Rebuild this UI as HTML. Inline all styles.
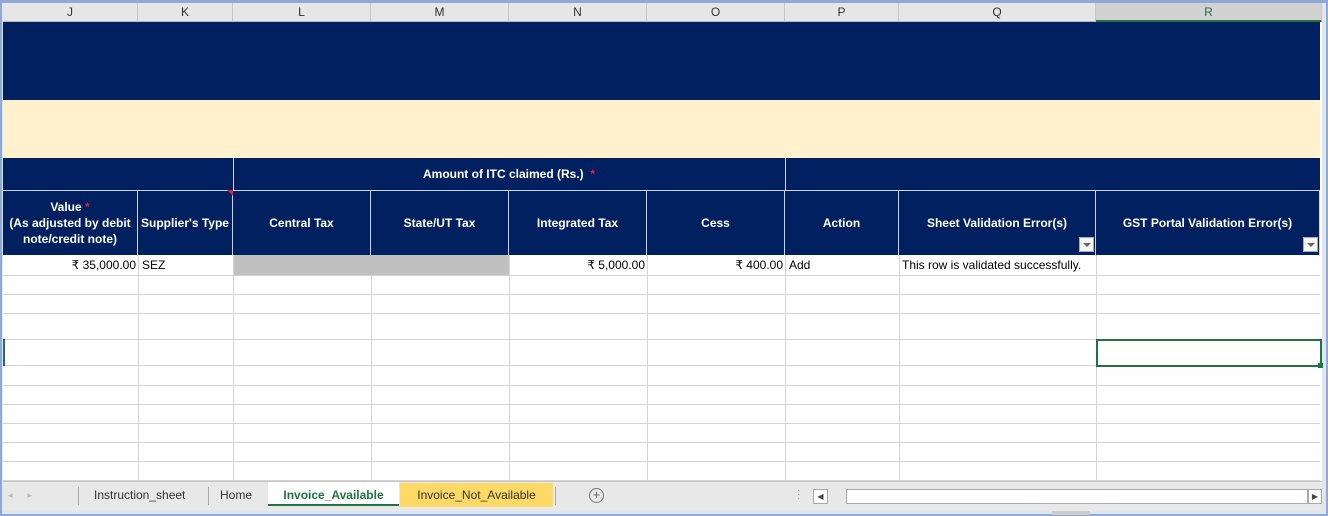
<!DOCTYPE html>
<html><head><style>
*{margin:0;padding:0;box-sizing:border-box}
body{width:1328px;height:516px;position:relative;background:#dfe6f0;font-family:"Liberation Sans",Arial,sans-serif;overflow:hidden}
.a{position:absolute}
.ch{position:absolute;top:3px;height:19px;background:#e6e6e6;border-right:1px solid #c8c8c8;border-bottom:1px solid #bdbdbd;font-size:12px;color:#333;text-align:center;line-height:19px}
.navy{background:#002060}
.hd{position:absolute;top:190px;height:65px;background:#002060;border-right:1px solid #c9d3e6;border-top:1px solid #c9d3e6;color:#fff;font-weight:bold;font-size:12px;display:flex;align-items:center;justify-content:center;text-align:center;line-height:16px}
.vl{position:absolute;top:255px;height:225px;width:1px;background:#d4d4d4}
.hl{position:absolute;left:3px;width:1317px;height:1px;background:#d4d4d4}
.c{position:absolute;top:256px;height:19px;font-size:12px;line-height:19px;color:#000}
.dd{position:absolute;top:237px;width:15px;height:15px;background:#f4f4f4;border:1px solid #aaa}
.dd:after{content:"";position:absolute;left:3px;top:5px;border-left:4px solid transparent;border-right:4px solid transparent;border-top:4px solid #666}
.star{color:#e0204a}
</style></head><body>
<div class="a" style="left:0;top:0;width:1328px;height:516px;border:2px solid #8ea9d8;border-top:3px solid #8ea9d8"></div>
<div class="a" style="left:3px;top:3px;width:1319px;height:478px;background:#fff"></div>
<div class="ch" style="left:3px;width:135px">J</div>
<div class="ch" style="left:138px;width:95px">K</div>
<div class="ch" style="left:233px;width:138px">L</div>
<div class="ch" style="left:371px;width:138px">M</div>
<div class="ch" style="left:509px;width:138px">N</div>
<div class="ch" style="left:647px;width:138px">O</div>
<div class="ch" style="left:785px;width:114px">P</div>
<div class="ch" style="left:899px;width:197px">Q</div>
<div class="ch" style="left:1096px;width:226px;background:#d2d2d2;color:#217346;border-bottom:2px solid #217346">R</div>
<div class="a navy" style="left:3px;top:22px;width:1317px;height:78px"></div>
<div class="a" style="left:3px;top:100px;width:1317px;height:58px;background:#fff2cc"></div>
<div class="a navy" style="left:3px;top:158px;width:1317px;height:33px"></div>
<div class="a" style="left:233px;top:158px;width:1px;height:33px;background:#c9d3e6"></div>
<div class="a" style="left:785px;top:158px;width:1px;height:33px;background:#c9d3e6"></div>
<div class="a" style="left:233px;top:158px;width:552px;height:32px;color:#fff;font-weight:bold;font-size:12px;text-align:center;line-height:32px">Amount of ITC claimed (Rs.) <span class="star">&nbsp;*</span></div>
<div class="hd" style="left:3px;width:135px"><div>Value <span class="star">*</span><br>(As adjusted by debit<br>note/credit note)</div></div>
<div class="hd" style="left:138px;width:95px">Supplier's Type</div>
<div class="a" style="left:227px;top:190px;border-left:6px solid transparent;border-top:6px solid #e0204a"></div>
<div class="hd" style="left:233px;width:138px">Central Tax</div>
<div class="hd" style="left:371px;width:138px">State/UT Tax</div>
<div class="hd" style="left:509px;width:138px">Integrated Tax</div>
<div class="hd" style="left:647px;width:138px">Cess</div>
<div class="hd" style="left:785px;width:114px">Action</div>
<div class="hd" style="left:899px;width:197px">Sheet Validation Error(s)</div>
<div class="hd" style="left:1096px;width:224px">GST Portal Validation Error(s)</div>
<div class="dd" style="left:1079px"></div>
<div class="dd" style="left:1303px"></div>
<div class="a" style="left:233px;top:255px;width:276px;height:20px;background:#c0c0c0"></div>
<div class="hl" style="top:275px"></div><div class="hl" style="top:294px"></div><div class="hl" style="top:313px"></div><div class="hl" style="top:339px"></div><div class="hl" style="top:365px"></div><div class="hl" style="top:385px"></div><div class="hl" style="top:404px"></div><div class="hl" style="top:423px"></div><div class="hl" style="top:442px"></div><div class="hl" style="top:461px"></div><div class="hl" style="top:480px"></div>
<div class="vl" style="left:138px"></div><div class="vl" style="left:233px"></div><div class="vl" style="left:371px;top:275px;height:205px"></div><div class="vl" style="left:509px"></div><div class="vl" style="left:647px"></div><div class="vl" style="left:785px"></div><div class="vl" style="left:899px"></div><div class="vl" style="left:1096px"></div>
<div class="c" style="left:3px;width:133px;text-align:right">₹ 35,000.00</div>
<div class="c" style="left:142px">SEZ</div>
<div class="c" style="left:509px;width:136px;text-align:right">₹ 5,000.00</div>
<div class="c" style="left:647px;width:136px;text-align:right">₹ 400.00</div>
<div class="c" style="left:789px">Add</div>
<div class="c" style="left:902px">This row is validated successfully.</div>
<div class="a" style="left:1096px;top:339px;width:226px;height:28px;border:2px solid #217346"></div>
<div class="a" style="left:1318px;top:363px;width:5px;height:5px;background:#217346"></div>
<div class="a" style="left:3px;top:339px;width:2px;height:27px;background:#217346"></div>
<div class="a" style="left:3px;top:481px;width:1319px;height:30px;background:#e8e8e8;border-top:1px solid #c6c6c6"></div>
<div class="a" style="left:8px;top:490px;font-size:9px;color:#bbb">◂&nbsp;&nbsp;&nbsp;&nbsp;&nbsp;&nbsp;▸</div>
<div class="a" style="left:78px;top:487px;width:1px;height:18px;background:#aaa"></div>
<div class="a" style="left:94px;top:488px;font-size:12px;color:#333">Instruction_sheet</div>
<div class="a" style="left:208px;top:487px;width:1px;height:18px;background:#aaa"></div>
<div class="a" style="left:220px;top:488px;font-size:12px;color:#333">Home</div>
<div class="a" style="left:268px;top:482px;width:131px;height:24px;background:#fff;border-bottom:2px solid #217346;font-size:12px;font-weight:bold;color:#217346;text-align:center;line-height:26px">Invoice_Available</div>
<div class="a" style="left:400px;top:483px;width:153px;height:24px;background:#ffd966;font-size:12px;color:#333;text-align:center;line-height:24px">Invoice_Not_Available</div>
<div class="a" style="left:555px;top:487px;width:1px;height:18px;background:#aaa"></div>
<div class="a" style="left:589px;top:488px;width:15px;height:15px;border:1px solid #777;border-radius:50%;font-size:13px;line-height:12px;text-align:center;color:#666">+</div>
<div class="a" style="left:797px;top:489px;font-size:10px;color:#999;line-height:4px">·<br>·<br>·</div>
<div class="a" style="left:813px;top:489px;width:15px;height:15px;background:#fff;border:1px solid #aaa;font-size:8px;text-align:center;line-height:13px;color:#444">◀</div>
<div class="a" style="left:846px;top:489px;width:462px;height:15px;background:#fff;border:1px solid #aaa"></div>
<div class="a" style="left:1308px;top:489px;width:14px;height:15px;background:#fff;border:1px solid #aaa;font-size:8px;text-align:center;line-height:13px;color:#444">▶</div>
<div class="a" style="left:1052px;top:511px;width:38px;height:4px;background:#ccc"></div>
</body></html>
